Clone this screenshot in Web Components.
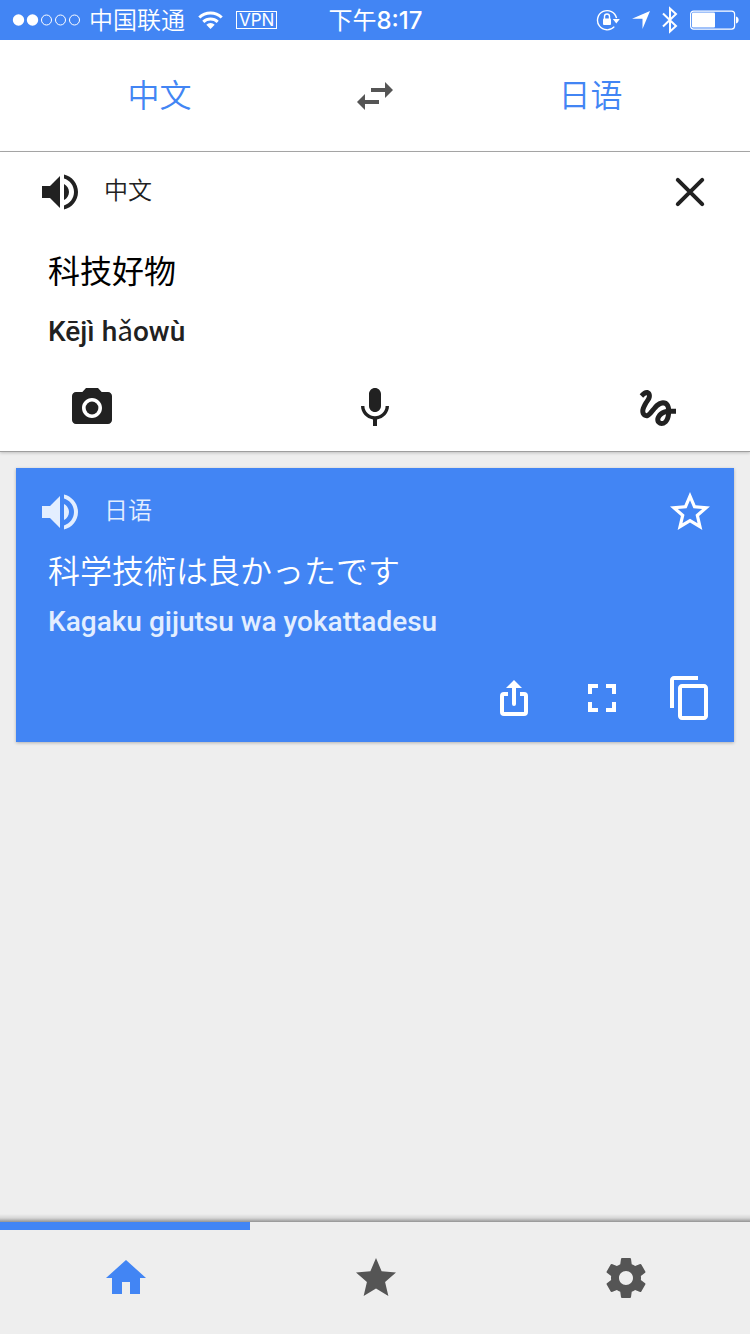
<!DOCTYPE html>
<html lang="zh-CN">
<head>
<meta charset="utf-8">
<meta name="viewport" content="width=device-width, initial-scale=1">
<title>翻译</title>
<style>
  html, body { margin: 0; height: 100%; }
  body {
    background: #eee;
    color: #212121;
    font-family: Roboto, "Noto Sans CJK SC", sans-serif;
    -webkit-font-smoothing: antialiased;
  }
</style>
</head>
<body>
<translate-app></translate-app>

<script>
const ICONS = {
  speaker: '<path d="M3 9v6h4l5 5V4L7 9H3zm13.5 3c0-1.77-1.02-3.29-2.5-4.03v8.05c1.48-.73 2.5-2.25 2.5-4.02zM14 3.23v2.06c2.89.86 5 3.54 5 6.71s-2.11 5.85-5 6.71v2.06c4.01-.91 7-4.49 7-8.77s-2.99-7.86-7-8.77z"/>',
  close: '<path d="M5.9 5.9l12.2 12.2M18.1 5.9L5.9 18.1" fill="none" stroke="currentColor" stroke-width="2" stroke-linecap="round"/>',
  swap: '<path d="M6.99 11L3 15l3.99 4v-3H14v-2H6.99v-3zM21 9l-3.99-4v3H10v2h7.01v3L21 9z"/>',
  camera: '<circle cx="12" cy="12" r="3.2"/><path d="M9 2L7.17 4H4c-1.1 0-2 .9-2 2v12c0 1.100.9 2 2 2h16c1.100 0 2-.9 2-2V6c0-1.100-.9-2-2-2h-3.170L15 2H9zm3 15c-2.760 0-5-2.240-5-5s2.240-5 5-5 5 2.240 5 5-2.240 5-5 5z"/>',
  mic: '<path d="M12 14c1.660 0 3-1.340 3-3V5c0-1.660-1.340-3-3-3S9 3.340 9 5v6c0 1.660 1.340 3 3 3zm5.300-3c0 3-2.540 5.100-5.300 5.100S6.700 14 6.700 11H5c0 3.410 2.720 6.230 6 6.720V21h2v-3.280c3.280-.48 6-3.300 6-6.720h-1.700z"/>',
  gesture: '<path d="M4.59 6.89c.7-.71 1.4-1.35 1.71-1.22.5.2 0 1.03-.3 1.52-.25.42-2.86 3.89-2.86 6.31 0 1.28.48 2.34 1.34 2.98.75.56 1.74.73 2.64.46 1.07-.31 1.95-1.4 3.06-2.77 1.21-1.49 2.83-3.44 4.08-3.44 1.63 0 1.65 1.01 1.76 1.79-3.78.64-5.38 3.67-5.38 5.37 0 1.7 1.44 3.09 3.21 3.09 1.63 0 4.29-1.33 4.69-6.1H21v-2.5h-2.47c-.15-1.65-1.09-4.2-4.03-4.2-2.25 0-4.18 1.91-4.94 2.84-.58.73-2.06 2.48-2.29 2.72-.25.3-.68.84-1.11.84-.45 0-.72-.83-.36-1.92.35-1.09 1.4-2.86 1.85-3.52.78-1.14 1.3-1.92 1.3-3.28C8.95 3.69 7.31 3 6.44 3 5.12 3 3.97 4 3.72 4.25c-.36.36-.66.66-.88.93l1.75 1.71zm9.29 11.66c-.31 0-.74-.26-.74-.72 0-.6.73-2.2 2.87-2.76-.3 2.69-1.43 3.48-2.13 3.48z"/>',
  starOutline: '<path d="M22 9.24l-7.19-.62L12 2 9.190 8.630 2 9.240l5.460 4.730L5.820 21 12 17.270 18.180 21l-1.630-7.030L22 9.240zM12 15.400l-3.760 2.270 1-4.280-3.320-2.880 4.380-.38L12 6.100l1.710 4.040 4.380.38-3.320 2.880 1 4.280L12 15.400z"/>',
  share: '<path d="M9 10H7a1 1 0 0 0-1 1v8a1 1 0 0 0 1 1h10a1 1 0 0 0 1-1v-8a1 1 0 0 0-1-1h-2" fill="none" stroke="currentColor" stroke-width="2"/><path d="M12 3l4 4h-3v8a1 1 0 0 1-2 0V7H8z"/>',
  fullscreen: '<path d="M7 14H5v5h5v-2H7v-3zm-2-4h2V7h3V5H5v5zm12 7h-3v2h5v-5h-2v3zM14 5v2h3v3h2V5h-5z"/>',
  copy: '<path d="M16 1H4c-1.100 0-2 .9-2 2v14h2V3h12V1zm3 4H8c-1.100 0-2 .9-2 2v14c0 1.100.9 2 2 2h11c1.100 0 2-.9 2-2V7c0-1.100-.9-2-2-2zm0 16H8V7h11v14z"/>',
  home: '<path d="M10 20v-6h4v6h5v-8h3L12 3 2 12h3v8z"/>',
  star: '<path d="M12 17.270L18.180 21l-1.640-7.030L22 9.240l-7.190-.61L12 2 9.190 8.630 2 9.240l5.460 4.730L5.820 21z"/>',
  gear: '<path d="M19.430 12.980c.04-.32.07-.64.07-.98s-.03-.66-.07-.98l2.110-1.650c.19-.15.24-.42.12-.64l-2-3.460c-.12-.22-.39-.3-.61-.22l-2.490 1c-.52-.4-1.080-.73-1.690-.98l-.38-2.650C14.460 2.180 14.250 2 14 2h-4c-.25 0-.46.18-.49.42l-.38 2.650c-.61.25-1.170.59-1.690.98l-2.490-1c-.23-.09-.49 0-.61.22l-2 3.460c-.13.22-.07.49.12.64l2.110 1.650c-.04.32-.07.65-.07.98s.03.66.07.98l-2.110 1.650c-.19.15-.24.42-.12.64l2 3.460c.12.22.39.3.61.22l2.490-1c.52.4 1.080.73 1.690.98l.38 2.650c.03.24.24.42.49.42h4c.25 0 .46-.18.49-.42l.38-2.650c.61-.25 1.170-.59 1.690-.98l2.490 1c.23.09.49 0 .61-.22l2-3.460c.12-.22.07-.49-.12-.64l-2.110-1.650zM12 15.500c-1.930 0-3.500-1.570-3.500-3.500s1.570-3.500 3.500-3.500 3.500 1.570 3.500 3.500-1.570 3.500-3.500 3.500z"/>'
};

const define = (name, html, setup) => {
  const template = document.createElement('template');
  template.innerHTML = html;
  customElements.define(name, class extends HTMLElement {
    constructor() {
      super();
      this.attachShadow({ mode: 'open' }).append(template.content.cloneNode(true));
    }
    connectedCallback() { if (setup) setup(this, this.shadowRoot); }
  });
};

define('app-icon', `
  <style>
    :host { display: block; width: 48px; height: 48px; }
    svg { display: block; width: 100%; height: 100%; fill: currentColor; }
  </style>
  <svg viewBox="0 0 24 24" aria-hidden="true"></svg>
`, (host, root) => { root.querySelector('svg').innerHTML = ICONS[host.getAttribute('name')]; });

define('icon-button', `
  <style>
    :host { display: block; }
    button { display: block; margin: 0; padding: 0; border: 0; background: none; color: inherit; cursor: pointer; }
  </style>
  <button type="button"></button>
`, (host, root) => {
  const button = root.querySelector('button');
  button.setAttribute('aria-label', host.getAttribute('label'));
  button.innerHTML = `<app-icon name="${host.getAttribute('icon')}"></app-icon>`;
});

define('status-bar', `
  <style>
    :host {
      display: grid; grid-template-columns: 1fr auto 1fr; align-items: center;
      height: 40px; padding: 0 11px 0 12px; box-sizing: border-box;
      background: #4285f4; color: #fff;
      font-size: 24px; line-height: 38px; white-space: nowrap;
    }
    svg { display: block; fill: currentColor; }
    .left, .right { display: flex; align-items: center; }
    .left { gap: 13px; }
    .carrier { display: flex; align-items: center; gap: 8px; font-weight: 350; }
    .carrier span, .time { padding-top: 2px; }
    .right { justify-content: flex-end; gap: 12px; }
    .time { font-family: Inter, "Noto Sans CJK SC", sans-serif; font-weight: 500; }
    .time span { font-weight: 400; }
    .vpn {
      border: 1px solid; padding: 0 2px; font: 400 17px/16px Inter, sans-serif;
    }
  </style>
  <div class="left">
    <div class="carrier">
      <svg width="69" height="12" viewBox="0 0 69 12" aria-hidden="true">
        <circle cx="6.500" cy="6" r="5.700"/><circle cx="20.500" cy="6" r="5.700"/>
        <g fill="none" stroke="currentColor"><circle cx="34.500" cy="6" r="5"/><circle cx="48.500" cy="6" r="5"/><circle cx="62.500" cy="6" r="5"/></g>
      </svg>
      <span>中国联通</span>
    </div>
    <svg width="25" height="18" viewBox="0 0 25 18" aria-hidden="true">
      <g fill="none" stroke="currentColor" stroke-width="3"><path d="M1.300 6.500a16 16 0 0 1 22.400 0"/><path d="M5.300 10.800a10.400 10.400 0 0 1 14.400 0"/></g>
      <path d="M12.500 18l-4.200-4.300a6 6 0 0 1 8.400 0z"/>
    </svg>
    <span class="vpn">VPN</span>
  </div>
  <div class="time"><span>下午</span>8:17</div>
  <div class="right">
    <svg width="24" height="22" viewBox="0 0 24 22" aria-hidden="true">
      <path d="M20.500 9.200A9.600 9.600 0 1 0 18.300 17.600" fill="none" stroke="currentColor" stroke-width="1.400"/>
      <path d="M16.800 10h7l-3.500 4.500z"/>
      <rect x="7" y="9.500" width="8" height="6.500" rx="1"/>
      <path d="M8.500 10V7.500a2.500 2.500 0 0 1 5 0V10" fill="none" stroke="currentColor" stroke-width="1.400"/>
    </svg>
    <svg width="18" height="18" viewBox="0 0 18 18" aria-hidden="true"><path d="M18 0L10.500 18V7.800H0z"/></svg>
    <svg width="16" height="28" viewBox="0 0 16 28" aria-hidden="true"><path d="M1 7.500L14 20 8 25.500V2.500L14 8 1 20.500" fill="none" stroke="currentColor" stroke-width="2"/></svg>
    <svg width="49" height="20" viewBox="0 0 49 20" aria-hidden="true">
      <rect x=".6" y="1.100" width="44" height="18" rx="3" fill="none" stroke="currentColor" stroke-width="1.200"/>
      <rect x="2" y="2.500" width="23" height="15" rx="1"/>
      <path d="M46 6.500c3.500.8 3.500 6.200 0 7z"/>
    </svg>
  </div>
`);

define('language-bar', `
  <style>
    :host {
      display: grid; grid-template-columns: 1fr 112px 1fr; align-items: center; justify-items: center;
      height: 112px; box-sizing: border-box; border-bottom: 1px solid #aaa; background: #fff;
    }
    button {
      margin: 0; padding: 0; border: 0; background: none; color: #4285f4; cursor: pointer;
      font: inherit; font-size: 32px; font-weight: 350; line-height: 48px;
    }
    icon-button { color: #555; }
  </style>
  <button type="button">中文</button>
  <icon-button icon="swap" label="交换语言"></icon-button>
  <button type="button">日语</button>
`);

define('text-block', `
  <style>
    :host { display: block; }
    header { display: flex; align-items: center; gap: 20px; }
    .language { flex: 1; font-size: 24px; line-height: 32px; font-weight: 350; padding-bottom: 2px; }
    .body { margin: var(--text-gap) 12px 0; }
    .text { font-size: 32px; line-height: 48px; font-weight: var(--text-weight); color: var(--text-color); }
    .reading { margin-top: var(--reading-gap); font-size: 28px; line-height: 32px; font-weight: 500; }
    ::slotted(p) { margin: 0; }
  </style>
  <header>
    <icon-button icon="speaker" label="朗读"></icon-button>
    <div class="language"><slot name="language"></slot></div>
    <slot name="action"></slot>
  </header>
  <div class="body">
    <div class="text"><slot name="text"></slot></div>
    <div class="reading"><slot name="reading"></slot></div>
  </div>
`);

define('source-panel', `
  <style>
    :host { display: block; padding: 16px 36px 19px; background: #fff; border-bottom: 1px solid #9e9e9e; box-shadow: 0 1px 3px rgba(0,0,0,.2); }
    text-block { --text-gap: 32px; --reading-gap: 20px; --text-weight: 400; --text-color: #000; }
    .thin { font-weight: 400; }
    .tools { display: flex; justify-content: space-between; margin-top: 36px; padding: 0 32px; }
  </style>
  <text-block>
    <span slot="language">中文</span>
    <icon-button slot="action" icon="close" label="清除"></icon-button>
    <p slot="text">科技好物</p>
    <p slot="reading">Kējì h<span class="thin">ǎ</span>owù</p>
  </text-block>
  <div class="tools">
    <icon-button icon="camera" label="拍照"></icon-button>
    <icon-button icon="mic" label="语音"></icon-button>
    <icon-button icon="gesture" label="手写"></icon-button>
  </div>
`);

define('result-card', `
  <style>
    :host { display: block; margin: 16px; padding: 20px; background: #4285f4; color: #e3eeff; box-shadow: 0 1px 3px rgba(0,0,0,.25); }
    text-block { --text-gap: 12px; --reading-gap: 10px; --text-weight: 350; --text-color: #fff; }
    p[lang] { font-family: Roboto, "Noto Sans CJK JP", sans-serif; }
    .tools, icon-button[slot] { color: #fff; }
    .tools { display: flex; justify-content: flex-end; gap: 40px; margin-top: 36px; }
  </style>
  <text-block>
    <span slot="language">日语</span>
    <icon-button slot="action" icon="starOutline" label="收藏"></icon-button>
    <p slot="text" lang="ja">科学技術は良かったです</p>
    <p slot="reading">Kagaku gijutsu wa yokattadesu</p>
  </text-block>
  <div class="tools">
    <icon-button icon="share" label="分享"></icon-button>
    <icon-button icon="fullscreen" label="全屏"></icon-button>
    <icon-button icon="copy" label="复制"></icon-button>
  </div>
`);

define('tab-bar', `
  <style>
    :host { display: block; position: relative; background: #eee; }
    :host::before {
      content: ""; position: absolute; left: 0; right: 0; bottom: 100%; height: 8px;
      background: linear-gradient(rgba(0,0,0,0), rgba(0,0,0,.1) 50%, rgba(0,0,0,.38));
    }
    nav { display: grid; grid-template-columns: repeat(3, 1fr); }
    a {
      display: flex; align-items: center; justify-content: center; padding-left: 2px;
      height: 112px; box-sizing: border-box; border: solid transparent; border-width: 8px 0; color: #555;
    }
    a[aria-current] { color: #4285f4; border-top-color: #4285f4; }
  </style>
  <nav>
    <a href="#home" aria-label="主页" aria-current="page"><app-icon name="home"></app-icon></a>
    <a href="#saved" aria-label="收藏"><app-icon name="star"></app-icon></a>
    <a href="#settings" aria-label="设置"><app-icon name="gear"></app-icon></a>
  </nav>
`);

define('translate-app', `
  <style>
    :host { display: flex; flex-direction: column; min-height: 100vh; }
    main { flex: 1; }
  </style>
  <status-bar></status-bar>
  <language-bar></language-bar>
  <main>
    <source-panel></source-panel>
    <result-card></result-card>
  </main>
  <tab-bar></tab-bar>
`);
</script>
</body>
</html>
